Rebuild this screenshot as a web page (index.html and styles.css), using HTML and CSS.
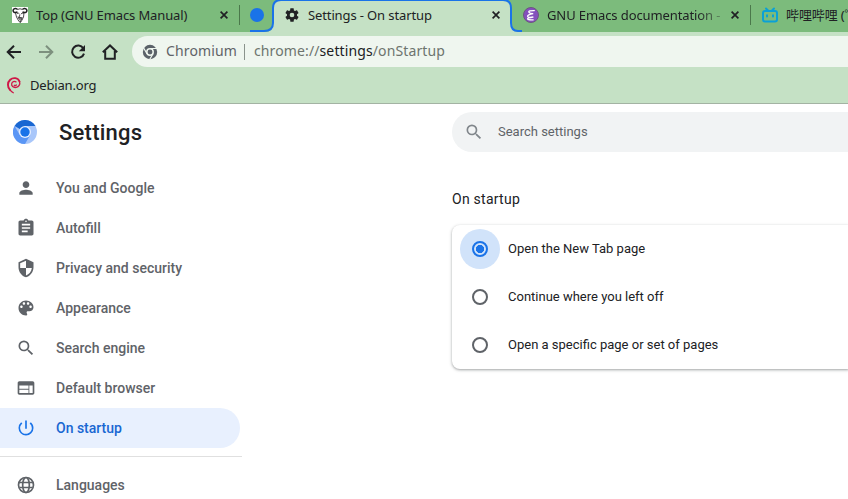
FILE: index.html
```html
<!DOCTYPE html>
<html lang="en">
<head>
<meta charset="utf-8">
<title>Settings - On startup</title>
<link rel="stylesheet" href="styles.css">
</head>
<body>
<header class="browser">
  <div class="tabs">
    <div class="tab tab-first">
      <svg class="favicon" viewBox="0 0 16 16"><path fill="#fff" d="M0 0h16v16H0z"/><g fill="none" stroke="#222"><path stroke-width="1.500" d="M5.500 5C2 6.500 .7 4.500 1.300 2.800 2 1 4.800 1 5.500 2.500M10.500 5c3.500 1.500 4.800-.5 4.200-2.200C14 1 11.200 1 10.500 2.500"/><path stroke-width=".8" d="M5.500 2.500q2.500-1.500 5 0M3.500 6l1 4 2.500 4.500 1.500 1 1.500-2.500 1.500-3 .5-4M5 6.500q1.500-1 2.500.5M9 7q1-1.500 2.500-.5M8 7.500l-1 3H9.500M6 9.500l1 2.500 2.500-.5M8 12l.5 3M10 10l-.5 3"/></g></svg>
      <span class="tab-title">Top (GNU Emacs Manual)</span>
      <svg class="close" viewBox="0 0 8 8"><path d="M.6.6l6.800 6.800M7.400.6L.6 7.400"/></svg>
      <span class="separator"></span>
    </div>
    <div class="tab tab-pinned"><span class="dot"></span></div>
    <div class="tab tab-active">
      <svg class="outline" viewBox="0 0 272 32"><path class="outline-fill" d="M16 32Q23 31 23 24V7Q23 0 30 0H254Q261 0 261 7V24Q261 31 269 32Z"/><path class="outline-line" d="M0 31H14Q23 31 23 23V8Q23 0 31 0H253Q261 0 261 8V23Q261 31 268 31H272"/></svg>
      <svg class="gear" viewBox="0 0 24 24"><path d="M19.430 12.980c.04-.32.070-.64.070-.98s-.03-.66-.07-.98l2.110-1.650c.19-.15.240-.42.120-.64l-2-3.460c-.12-.22-.39-.3-.61-.22l-2.490 1c-.52-.4-1.080-.73-1.690-.98l-.38-2.650C14.460 2.180 14.250 2 14 2h-4c-.25 0-.46.180-.49.420l-.38 2.650c-.61.250-1.170.590-1.690.980l-2.490-1c-.23-.09-.49 0-.61.220l-2 3.460c-.13.220-.07.490.120.640l2.110 1.650c-.04.320-.07.650-.07.980s.03.660.070.980l-2.110 1.650c-.19.150-.24.420-.12.640l2 3.460c.12.220.390.300.610.220l2.490-1c.52.400 1.080.730 1.690.980l.38 2.650c.03.240.240.420.490.420h4c.25 0 .46-.18.490-.42l.38-2.650c.61-.25 1.170-.59 1.690-.98l2.490 1c.23.090.490 0 .610-.22l2-3.460c.12-.22.070-.49-.12-.64zM12 15.500a3.500 3.500 0 1 1 0-7 3.500 3.500 0 0 1 0 7z"/></svg>
      <span class="tab-title">Settings - On startup</span>
      <svg class="close" viewBox="0 0 8 8"><path d="M.6.6l6.800 6.800M7.400.6L.6 7.400"/></svg>
    </div>
    <div class="tab tab-docs">
      <svg class="favicon" viewBox="0 0 16 16"><circle cx="8" cy="8" r="7.500" fill="#8450bd" stroke="#6d577f"/><path d="M11.300 3.600Q5.200 3.500 5.800 5t4.400 1.700Q4.300 7.700 4.600 9.300t5.800.7Q4.200 11 4.600 12t5.600.8" fill="none" stroke="#fff" stroke-width="1.300" stroke-linecap="round"/></svg>
      <span class="tab-title fade">GNU Emacs documentation -</span>
      <svg class="close" viewBox="0 0 8 8"><path d="M.6.6l6.800 6.800M7.400.6L.6 7.400"/></svg>
      <span class="separator"></span>
    </div>
    <div class="tab tab-last">
      <svg class="favicon" viewBox="0 0 16 16" fill="none" stroke="#0aa1d7" stroke-width="2" stroke-linecap="round"><rect x="1" y="4" width="14" height="10.500" rx="2"/><path d="M4 1.500l2 2M12 1.500l-2 2M5 8.300v1.200M11 8.300v1.200"/></svg>
      <span class="tab-title">哔哩哔哩 (゜</span>
    </div>
  </div>
  <div class="toolbar">
    <svg class="tool" viewBox="0 0 16 16"><path d="M15 8H2M8 1.700L1.700 8 8 14.300"/></svg>
    <svg class="tool disabled" viewBox="0 0 16 16"><path d="M1 8h13M8 1.700L14.300 8 8 14.300"/></svg>
    <svg class="tool" viewBox="0 0 16 16"><path d="M13.300 4.300A6.100 6.100 0 1 0 14 9.600"/><path class="solid" d="M15 1v6.200H8.800z"/></svg>
    <svg class="tool" viewBox="0 0 16 16"><path d="M.8 8.300L8 1.500l7.200 6.800M3.200 7v7.700h9.600V7"/></svg>
    <div class="omnibox">
      <svg class="product" viewBox="0 0 16 16"><circle cx="8" cy="8" r="7.200" fill="#5b6269"/><g stroke="#eff6ef" fill="none"><circle cx="8" cy="8" r="3.200" stroke-width="1.500"/><path stroke-width="1.200" d="M8 4.500h7.200M5 9.700L1.500 3.700M11 9.800L7.500 15.700"/></g></svg>
      <span class="scheme">Chromium</span><span class="rule"></span>
      <span class="url">chrome://<b>settings</b>/onStartup</span>
    </div>
  </div>
  <div class="bookmarks">
    <svg class="debian" viewBox="0 0 14 17"><g fill="none" stroke="#cf1747" stroke-linecap="round"><path stroke-width="1.900" d="M12.500 4.500C11 .5 6 .2 3.200 2.700.2 5.300.3 10 3 12.800"/><path stroke-width="1.300" d="M3 12.800q1.300 1.700 3.300 2.900M12.500 4.500c1 3-.8 5.500-3.200 5.900-3.200.6-5.100-1.500-4.600-3.700.4-2 2.700-2.900 4.300-1.800M7.200 8.300q1 .8 2.200-.3"/></g></svg>
    <span>Debian.org</span>
  </div>
</header>
<div class="page">
  <aside class="sidebar">
    <div class="brand">
      <svg class="logo" viewBox="0 0 24 24"><circle cx="12" cy="12" r="12" fill="#a9c7fa"/><path fill="#1967d2" d="M12 12L1.600 6A12 12 0 0 1 22.400 6H12z"/><path fill="#5a96f5" d="M1.600 6A12 12 0 0 0 12 24l5.200-9L12 12 6.800 15z"/><circle cx="12" cy="12" r="6" fill="#e8f0fe"/><circle cx="12" cy="12" r="4.700" fill="#1a73e8"/></svg>
      <h1>Settings</h1>
    </div>
    <nav>
      <a class="item"><svg viewBox="0 0 24 24"><path d="M12 12c2.210 0 4-1.790 4-4s-1.790-4-4-4-4 1.790-4 4 1.790 4 4 4zm0 2c-2.670 0-8 1.340-8 4v2h16v-2c0-2.660-5.330-4-8-4z"/></svg>You and Google</a>
      <a class="item"><svg viewBox="0 0 24 24"><path d="M19 3h-4.180C14.400 1.840 13.300 1 12 1s-2.400.84-2.820 2H5c-1.100 0-2 .9-2 2v14c0 1.100.9 2 2 2h14c1.100 0 2-.9 2-2V5c0-1.100-.9-2-2-2zm-7 0c.55 0 1 .45 1 1s-.45 1-1 1-1-.45-1-1 .45-1 1-1zm2 14H7v-2h7v2zm3-4H7v-2h10v2zm0-4H7V7h10v2z"/></svg>Autofill</a>
      <a class="item"><svg viewBox="0 0 24 24"><path d="M12 1L3 5v6c0 5.550 3.840 10.740 9 12 5.160-1.260 9-6.450 9-12V5l-9-4zm0 10.990h7c-.53 4.120-3.280 7.790-7 8.940V12H5V6.300l7-3.110v8.800z"/></svg>Privacy and security</a>
      <a class="item"><svg viewBox="0 0 24 24"><path d="M12 3c-4.970 0-9 4.030-9 9s4.030 9 9 9c.83 0 1.500-.67 1.500-1.500 0-.39-.15-.74-.39-1.010-.23-.26-.38-.61-.38-.99 0-.83.67-1.500 1.500-1.500H16c2.760 0 5-2.240 5-5 0-4.420-4.030-8-9-8zm-5.500 9c-.83 0-1.500-.67-1.500-1.500S5.670 9 6.500 9 8 9.670 8 10.500 7.330 12 6.500 12zm3-4C8.670 8 8 7.330 8 6.500S8.670 5 9.500 5s1.500.67 1.500 1.500S10.330 8 9.500 8zm5 0c-.83 0-1.500-.67-1.500-1.500S13.670 5 14.500 5s1.500.67 1.500 1.500S15.330 8 14.500 8zm3 4c-.83 0-1.500-.67-1.500-1.500S16.670 9 17.500 9s1.500.67 1.500 1.500-.67 1.500-1.500 1.500z"/></svg>Appearance</a>
      <a class="item"><svg viewBox="0 0 24 24"><path d="M15.500 14h-.79l-.28-.27A6.471 6.471 0 0 0 16 9.500 6.500 6.500 0 1 0 9.500 16c1.610 0 3.090-.59 4.230-1.570l.27.280v.79l5 4.990L20.490 19l-4.990-5zm-6 0C7.010 14 5 11.990 5 9.500S7.010 5 9.500 5 14 7.010 14 9.500 11.990 14 9.500 14z"/></svg>Search engine</a>
      <a class="item"><svg viewBox="0 0 24 24"><path d="M20 4H4c-1.100 0-1.990.9-1.990 2L2 18c0 1.100.9 2 2 2h16c1.100 0 2-.9 2-2V6c0-1.100-.9-2-2-2zm-5 14H4v-4h11v4zm0-5H4V9h11v4zm5 5h-4V9h4v9z"/></svg>Default browser</a>
      <a class="item selected"><svg viewBox="0 0 24 24"><path d="M13 3h-2v10h2V3zm4.830 2.170l-1.420 1.420A6.920 6.920 0 0 1 19 12c0 3.870-3.130 7-7 7A6.995 6.995 0 0 1 7.580 6.580L6.170 5.170A8.932 8.932 0 0 0 3 12a9 9 0 0 0 18 0c0-2.740-1.230-5.180-3.170-6.830z"/></svg>On startup</a>
      <div class="divider"></div>
      <a class="item"><svg viewBox="0 0 24 24"><g fill="none" stroke="#5f6368" stroke-width="2"><circle cx="12" cy="12" r="9"/><ellipse cx="12" cy="12" rx="4" ry="9"/><path d="M4 9h16M4 15h16"/></g></svg>Languages</a>
    </nav>
  </aside>
  <main>
    <div class="search"><svg viewBox="0 0 24 24"><path d="M15.500 14h-.79l-.28-.27A6.471 6.471 0 0 0 16 9.500 6.500 6.500 0 1 0 9.500 16c1.610 0 3.090-.59 4.230-1.570l.27.280v.79l5 4.990L20.490 19l-4.990-5zm-6 0C7.010 14 5 11.990 5 9.500S7.010 5 9.500 5 14 7.010 14 9.500 11.990 14 9.500 14z"/></svg><span class="label">Search settings</span></div>
    <h2>On startup</h2>
    <div class="card">
      <div class="option"><span class="halo on"><i class="radio"></i></span><span class="label">Open the New Tab page</span></div>
      <div class="option"><span class="halo"><i class="radio"></i></span><span class="label">Continue where you left off</span></div>
      <div class="option"><span class="halo"><i class="radio"></i></span><span class="label">Open a specific page or set of pages</span></div>
    </div>
  </main>
</div>
</body>
</html>
```
FILE: styles.css
```css
* { box-sizing: border-box; }
body { margin: 0; width: 848px; height: 499px; overflow: hidden; background: #fff; font-family: Roboto, sans-serif; color: #202124; }
svg { display: block; flex: none; }
.browser { height: 104px; background: #c5e1c5; border-bottom: 1px solid #a3b3a3; font-family: "Noto Sans", "Noto Sans CJK SC", sans-serif; }
.tabs { display: flex; height: 32px; width: 848px; overflow: hidden; background: #7cbb7c; }
.tab { display: flex; align-items: center; flex: none; height: 30px; font-size: 13px; letter-spacing: -.12px; white-space: nowrap; position: relative; }
.tab-title { flex: 1; overflow: hidden; line-height: 20px; }
.favicon { width: 16px; height: 16px; }
.close { width: 8px; height: 8px; fill: none; stroke: #202124; stroke-width: 1.7; }
.separator { width: 1px; height: 20px; background: #4b784b; }
.tab-first { width: 240px; padding-left: 12px; }
.tab-first .tab-title { margin-left: 8px; }
.tab-first .close { margin-right: 11px; }
.tab-pinned { width: 33px; padding-left: 10px; }
.dot { width: 14px; height: 14px; border-radius: 50%; background: #1a73e8; }
.tab-active { width: 239px; padding: 0 12px 0 11px; z-index: 1; }
.tab-active > * { position: relative; }
.tab-active .tab-title { margin-left: 8px; }
.tab-active .outline { position: absolute; left: -23px; top: 0; width: 272px; height: 32px; }
.outline-fill { fill: #c5e1c5; }
.outline-line { fill: none; stroke: #1a73e8; stroke-width: 2; }
.gear { width: 16px; height: 16px; fill: #202124; }
.tab-docs { width: 239px; padding-left: 11px; letter-spacing: 0; }
.tab-docs .tab-title { flex: none; width: 176px; margin: 0 8px; }
.fade { -webkit-mask-image: linear-gradient(90deg, #000 150px, transparent 184px); mask-image: linear-gradient(90deg, #000 150px, transparent 184px); }
.tab-docs .separator { margin-left: 11px; }
.tab-docs .fade { letter-spacing: -.1px; }
.tab-last { width: 97px; padding-left: 11px; }
.tab-last .tab-title { margin-left: 8px; }
.toolbar { display: flex; align-items: center; gap: 16px; height: 39px; padding-left: 6px; }
.tool { width: 16px; height: 16px; fill: none; stroke: #202124; stroke-width: 2; }
.tool .solid { fill: #202124; stroke: none; }
.disabled { stroke: #7d907e; }
.omnibox { display: flex; align-items: center; flex: 1; height: 31px; margin-left: -2px; padding-left: 10px; border-radius: 16px 0 0 16px; background: #eff6ef; color: #5f6368; font-size: 14px; }
.product { width: 16px; height: 16px; margin-right: 8px; }
.scheme, .url { padding-bottom: 2px; }
.scheme { letter-spacing: .13px; }
.rule { width: 1px; height: 16px; margin: 0 9px 0 7px; background: #8a938c; }
.url { color: #6d746e; letter-spacing: .12px; }
.url b { font-weight: 400; color: #202124; }
.bookmarks { display: flex; align-items: center; gap: 9px; height: 29px; padding-left: 7px; font-size: 13px; letter-spacing: -.17px; }
.bookmarks span { padding-bottom: 2px; }
.debian { width: 14px; height: 17px; }
.page { display: flex; height: 395px; overflow: hidden; }
.sidebar { width: 242px; flex: none; margin-right: 210px; }
.brand { display: flex; align-items: center; gap: 22px; height: 56px; padding-left: 13px; margin-bottom: 8px; }
.logo { width: 24px; height: 24px; }
h1 { margin: 0; font-size: 22px; font-weight: 500; letter-spacing: .25px; }
.item { display: flex; align-items: center; gap: 20px; width: 240px; height: 40px; padding-left: 16px; font-size: 14px; font-weight: 500; color: #5f6368; }
.item svg { width: 20px; height: 20px; fill: currentColor; }
.selected { border-radius: 0 20px 20px 0; background: #e8f0fe; color: #1967d2; }
.item.selected svg { fill: #1a73e8; }
.divider { height: 1px; margin: 8px 0; background: #e0e0e0; }
main { flex: 1; min-width: 0; padding-top: 8px; }
.search { display: flex; align-items: center; gap: 14px; height: 40px; padding-left: 12px; border-radius: 20px 0 0 20px; background: #f1f3f4; color: #5f6368; font-size: 13px; }
.search svg { width: 20px; height: 20px; fill: #80868b; }
.label { padding-bottom: 2px; }
h2 { margin: 37px 0 15px; font-size: 14px; line-height: 21px; font-weight: 400; letter-spacing: .25px; }
.card { border-radius: 8px 0 0 8px; background: #fff; box-shadow: 0 1px 2px rgba(60,64,67,.3), 0 1px 3px 1px rgba(60,64,67,.15); }
.option { display: flex; align-items: center; height: 48px; padding-left: 8px; gap: 8px; font-size: 13px; }
.halo { display: grid; place-items: center; width: 40px; height: 40px; border-radius: 50%; }
.radio { width: 16px; height: 16px; border: 2px solid #5f6368; border-radius: 50%; }
.on { background: #d1e3fa; }
.on .radio { border-color: #1a73e8; background: radial-gradient(circle, #1a73e8 3.8px, transparent 4.4px); }
```
